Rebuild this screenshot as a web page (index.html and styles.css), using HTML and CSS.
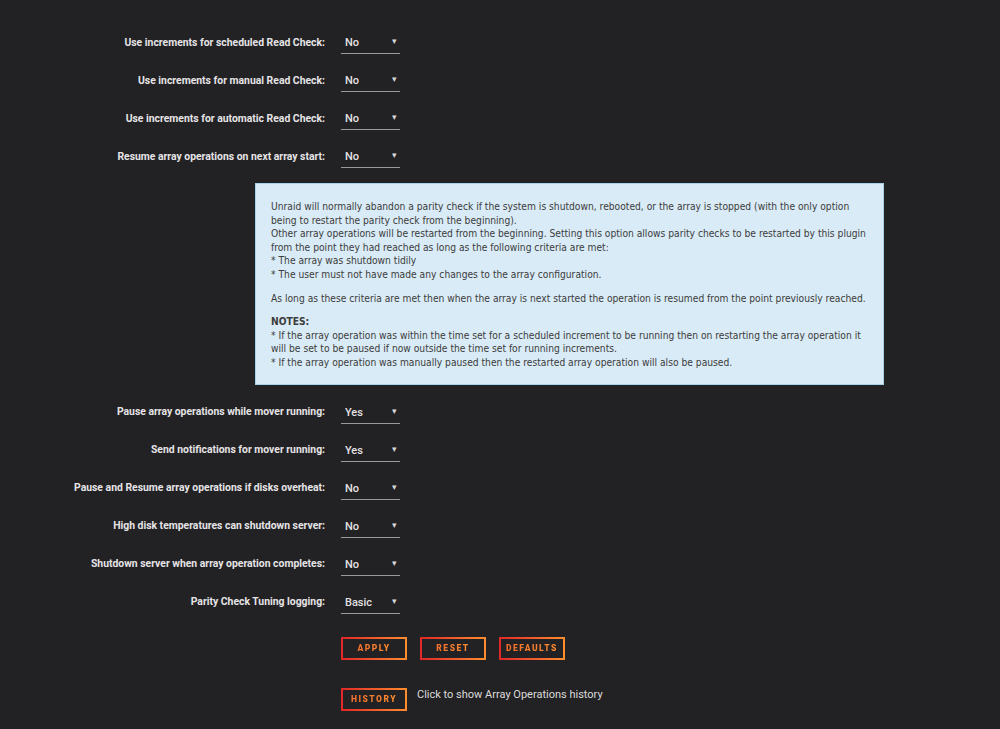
FILE: index.html
```html
<!DOCTYPE html>
<html lang="en">
<head>
  <meta charset="UTF-8" />
  <title>Parity Check Tuning</title>
  <link rel="stylesheet" href="styles.css">
</head>
<body>
  <form class="settings">
    <div class="row">
      <label>Use increments for scheduled Read Check:</label>
      <span class="dropdown"><select><option>No</option><option>Yes</option></select></span>
    </div>
    <div class="row">
      <label>Use increments for manual Read Check:</label>
      <span class="dropdown"><select><option>No</option><option>Yes</option></select></span>
    </div>
    <div class="row">
      <label>Use increments for automatic Read Check:</label>
      <span class="dropdown"><select><option>No</option><option>Yes</option></select></span>
    </div>
    <div class="row">
      <label>Resume array operations on next array start:</label>
      <span class="dropdown"><select><option>No</option><option>Yes</option></select></span>
    </div>

    <div class="inline-help">
      <p>Unraid will normally abandon a parity check if the system is shutdown, rebooted, or the array is stopped (with the only option<br>
      being to restart the parity check from the beginning).<br>
      Other array operations will be restarted from the beginning. Setting this option allows parity checks to be restarted by this plugin<br>
      from the point they had reached as long as the following criteria are met:<br>
      * The array was shutdown tidily<br>
      * The user must not have made any changes to the array configuration.</p>
      <p>As long as these criteria are met then when the array is next started the operation is resumed from the point previously reached.</p>
      <p><b>NOTES:</b><br>
      * If the array operation was within the time set for a scheduled increment to be running then on restarting the array operation it<br>
      will be set to be paused if now outside the time set for running increments.<br>
      * If the array operation was manually paused then the restarted array operation will also be paused.</p>
    </div>

    <div class="row">
      <label>Pause array operations while mover running:</label>
      <span class="dropdown"><select><option>Yes</option><option>No</option></select></span>
    </div>
    <div class="row">
      <label>Send notifications for mover running:</label>
      <span class="dropdown"><select><option>Yes</option><option>No</option></select></span>
    </div>
    <div class="row">
      <label>Pause and Resume array operations if disks overheat:</label>
      <span class="dropdown"><select><option>No</option><option>Yes</option></select></span>
    </div>
    <div class="row">
      <label>High disk temperatures can shutdown server:</label>
      <span class="dropdown"><select><option>No</option><option>Yes</option></select></span>
    </div>
    <div class="row">
      <label>Shutdown server when array operation completes:</label>
      <span class="dropdown"><select><option>No</option><option>Yes</option></select></span>
    </div>
    <div class="row">
      <label>Parity Check Tuning logging:</label>
      <span class="dropdown"><select><option>Basic</option><option>Testing</option></select></span>
    </div>

    <div class="actions">
      <button type="button" class="btn"><span>Apply</span></button>
      <button type="button" class="btn"><span>Reset</span></button>
      <button type="button" class="btn"><span>Defaults</span></button>
    </div>

    <div class="actions history">
      <button type="button" class="btn"><span>History</span></button>
      <span class="hint">Click to show Array Operations history</span>
    </div>
  </form>
</body>
</html>
```

FILE: styles.css
```css
body {
  margin: 0;
  background: #222123;
  color: #e4e2e4;
  font-family: 'Roboto', 'Liberation Sans', sans-serif;
}

.settings {
  padding-top: 23px;
  width: 1000px;
}

.row {
  display: flex;
  align-items: center;
  height: 38px;
}

.row label {
  width: 325px;
  text-align: right;
  font-size: 10.4px;
  font-weight: 700;
  color: #e6e4e6;
}

.dropdown {
  position: relative;
  margin-left: 16px;
  width: 59px;
}
.dropdown::after {
  content: '\25BE';
  position: absolute;
  right: 3px;
  top: 7px;
  font-size: 9px;
  line-height: 9px;
  color: #d8d8d8;
  pointer-events: none;
}

.dropdown select {
  appearance: none;
  -webkit-appearance: none;
  width: 100%;
  height: 22px;
  margin: 2px 0 0;
  padding: 0 0 0 4px;
  background: transparent;
  border: none;
  border-bottom: 1px solid #9a9a9a;
  border-radius: 0;
  color: #e4e2e4;
  font-family: inherit;
  font-size: 11px;
  font-weight: 500;
}

/* help text keeps the plugin's own line breaks */
.inline-help {
  margin: 8px 0 8px 255px;
  width: 599px;
  padding: 16px 13px 14px 15px;
  background: #d9ebf6;
  border: 1px solid #a8d2ea;
  color: #3c3c3c;
  font-family: 'DejaVu Sans Condensed', 'DejaVu Sans', sans-serif;
  font-size: 10.2px;
  line-height: 13.6px;
  white-space: nowrap;
}
.inline-help p {
  margin: 0 0 10px;
}
.inline-help p:last-child {
  margin-bottom: 0;
}

.actions {
  display: flex;
  gap: 13px;
  margin: 16px 0 0 341px;
}
.actions.history {
  margin-top: 28px;
  align-items: flex-start;
  gap: 10px;
}

.btn {
  width: 66px;
  height: 23px;
  padding: 0;
  border: 2px solid transparent;
  border-image: linear-gradient(90deg, #e22828, #ff8c2f) 1;
  background: transparent;
  font-family: 'Roboto', 'Liberation Sans', sans-serif;
  font-size: 8.5px;
  font-weight: 900;
  letter-spacing: 1.5px;
  text-transform: uppercase;
  cursor: pointer;
}
.btn span {
  background: linear-gradient(90deg, #f4702c, #ff8c2f);
  -webkit-background-clip: text;
  background-clip: text;
  color: transparent;
}

.hint {
  font-size: 11px;
  color: #dcdcdc;
  line-height: 14px;
}
```
